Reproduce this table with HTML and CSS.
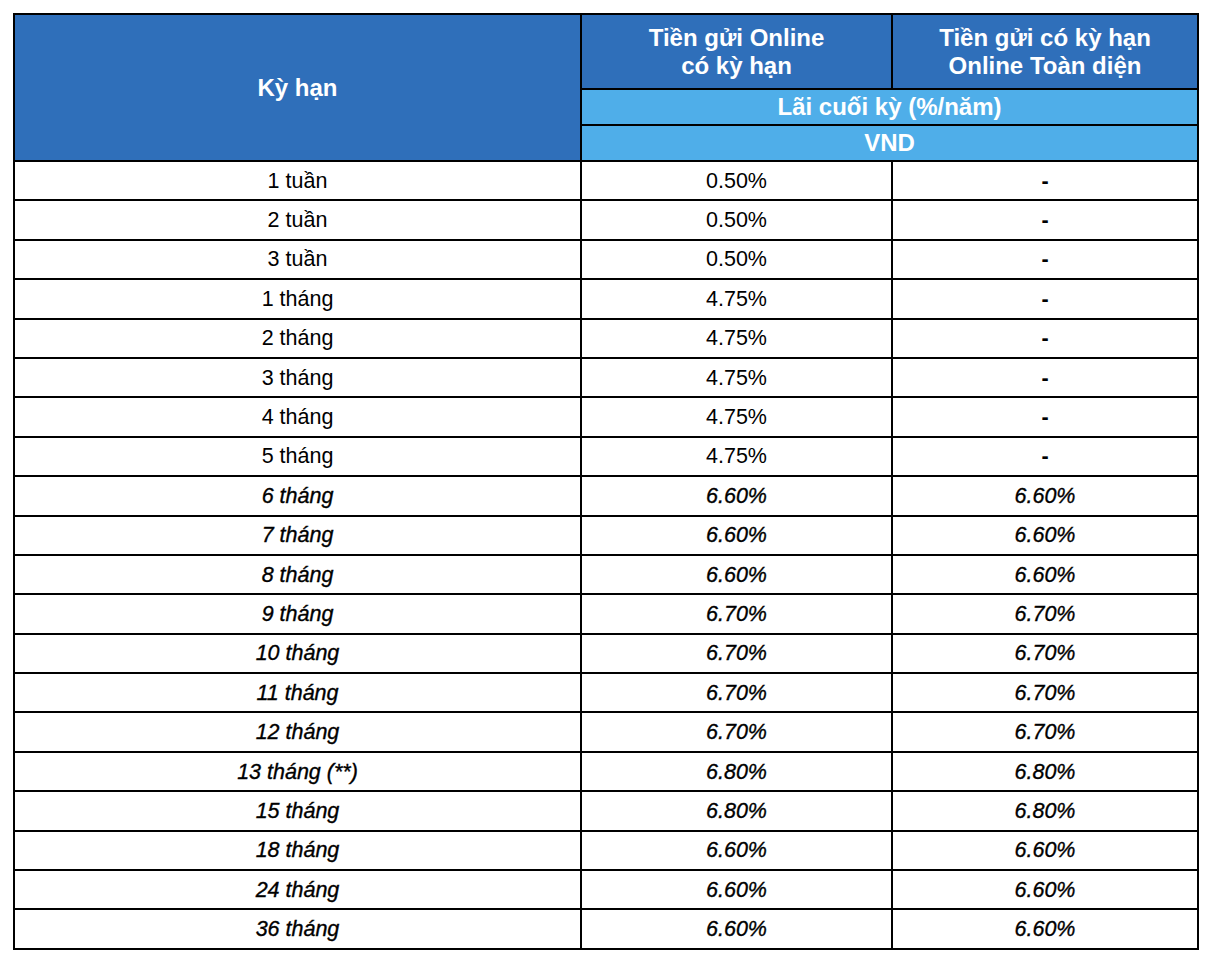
FILE: index.html
```html
<!DOCTYPE html>
<html lang="vi">
<head>
<meta charset="utf-8">
<link rel="stylesheet" href="styles.css">
</head>
<body>
<table class="rates">
  <colgroup>
    <col class="c1">
    <col class="c2">
    <col class="c3">
  </colgroup>
  <thead>
    <tr class="h1">
      <th rowspan="3" class="dark">Kỳ hạn</th>
      <th class="dark">Tiền gửi Online<br>có kỳ hạn</th>
      <th class="dark">Tiền gửi có kỳ hạn<br>Online Toàn diện</th>
    </tr>
    <tr class="h2"><th colspan="2" class="light">Lãi cuối kỳ (%/năm)</th></tr>
    <tr class="h2"><th colspan="2" class="light">VND</th></tr>
  </thead>
  <tbody>
    <tr><td>1 tuần</td><td>0.50%</td><td class="dash">-</td></tr>
    <tr><td>2 tuần</td><td>0.50%</td><td class="dash">-</td></tr>
    <tr><td>3 tuần</td><td>0.50%</td><td class="dash">-</td></tr>
    <tr><td>1 tháng</td><td>4.75%</td><td class="dash">-</td></tr>
    <tr><td>2 tháng</td><td>4.75%</td><td class="dash">-</td></tr>
    <tr><td>3 tháng</td><td>4.75%</td><td class="dash">-</td></tr>
    <tr><td>4 tháng</td><td>4.75%</td><td class="dash">-</td></tr>
    <tr><td>5 tháng</td><td>4.75%</td><td class="dash">-</td></tr>
    <tr class="it"><td>6 tháng</td><td>6.60%</td><td>6.60%</td></tr>
    <tr class="it"><td>7 tháng</td><td>6.60%</td><td>6.60%</td></tr>
    <tr class="it"><td>8 tháng</td><td>6.60%</td><td>6.60%</td></tr>
    <tr class="it"><td>9 tháng</td><td>6.70%</td><td>6.70%</td></tr>
    <tr class="it"><td>10 tháng</td><td>6.70%</td><td>6.70%</td></tr>
    <tr class="it"><td>11 tháng</td><td>6.70%</td><td>6.70%</td></tr>
    <tr class="it"><td>12 tháng</td><td>6.70%</td><td>6.70%</td></tr>
    <tr class="it"><td>13 tháng (**)</td><td>6.80%</td><td>6.80%</td></tr>
    <tr class="it"><td>15 tháng</td><td>6.80%</td><td>6.80%</td></tr>
    <tr class="it"><td>18 tháng</td><td>6.60%</td><td>6.60%</td></tr>
    <tr class="it"><td>24 tháng</td><td>6.60%</td><td>6.60%</td></tr>
    <tr class="it"><td>36 tháng</td><td>6.60%</td><td>6.60%</td></tr>
  </tbody>
</table>
</body>
</html>
```

FILE: styles.css
```css
html, body {
  margin: 0;
  padding: 0;
  background: #ffffff;
}

body {
  padding: 13px 0 0 13px;
  font-family: "Liberation Sans", Arial, sans-serif;
  color: #000;
}

.rates {
  border-collapse: collapse;
  table-layout: fixed;
  width: 1184px;
  border: 2px solid #000;
}

.c1 { width: 567px; }
.c2 { width: 311px; }
.c3 { width: 306px; }

.rates th,
.rates td {
  border: 2px solid #000;
  padding: 0;
  text-align: center;
  vertical-align: middle;
}

.rates th {
  color: #fff;
  font-weight: bold;
  font-size: 24px;
  line-height: 28px;
}

.dark { background: #2f6fba; }
.light { background: #4faee9; }

.h1 th { height: 73px; }
.h2 th { height: 34px; }

.rates td {
  height: 37.4px;
  font-size: 21.5px;
  line-height: 24px;
}

.rates .dash {
  font-weight: bold;
}

.it td {
  font-style: italic;
  -webkit-text-stroke: 0.35px #000;
}
```
